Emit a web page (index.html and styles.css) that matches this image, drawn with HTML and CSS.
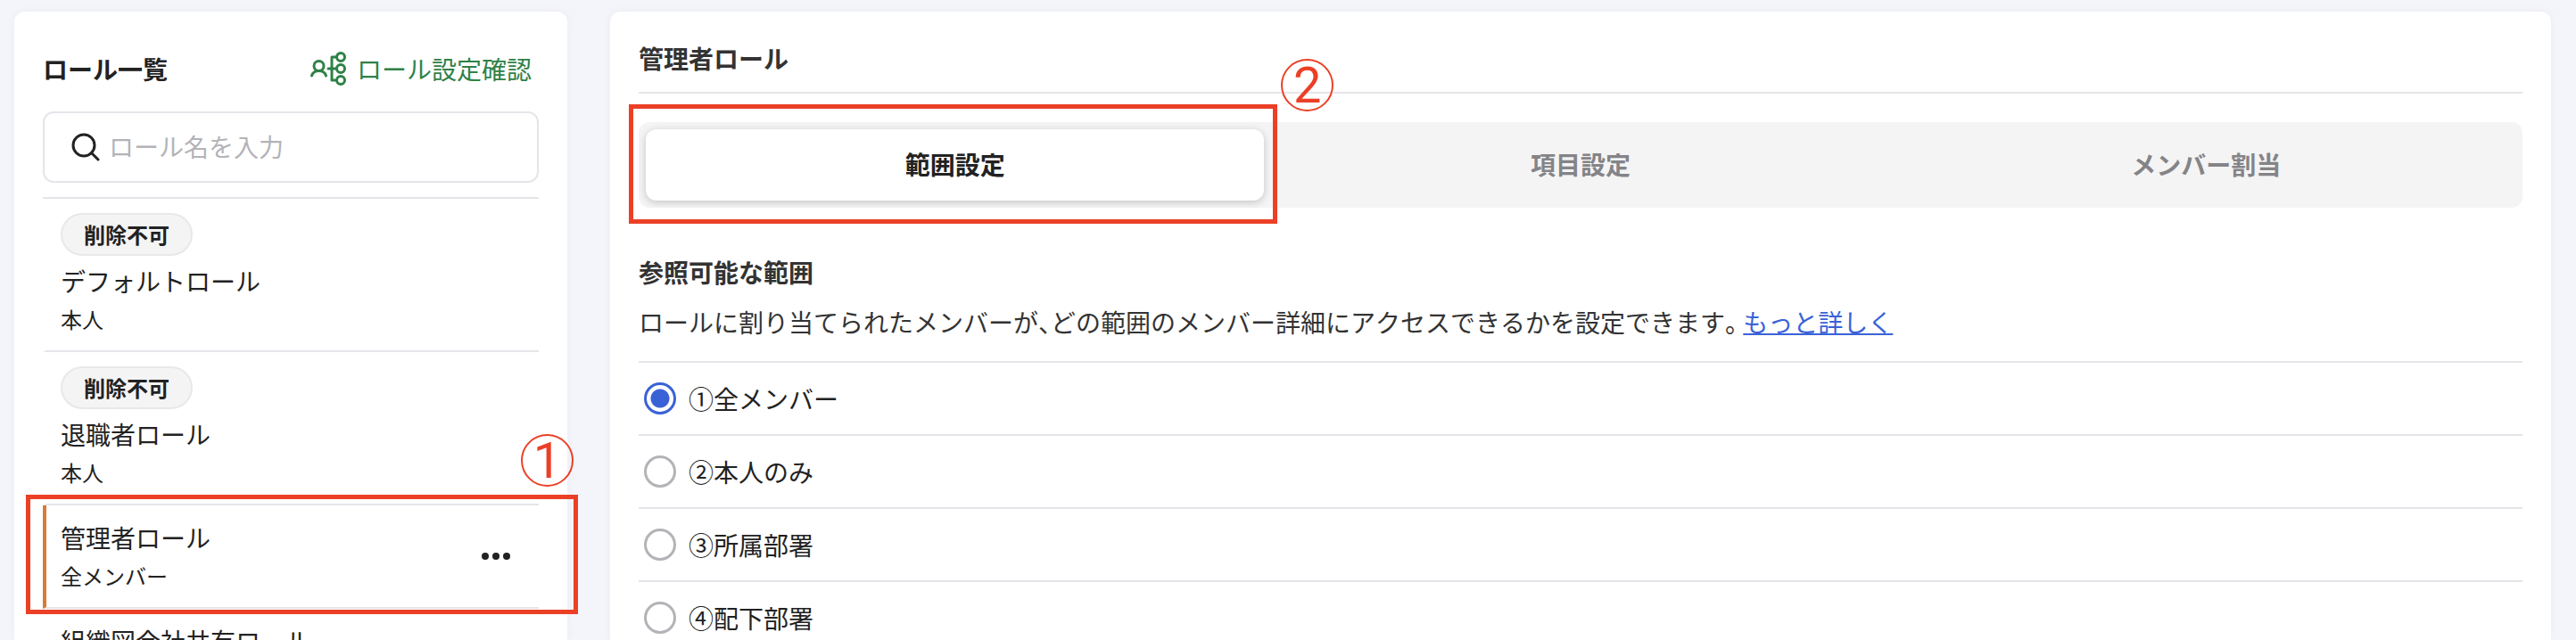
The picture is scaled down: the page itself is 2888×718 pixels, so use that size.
FILE: index.html
```html
<!DOCTYPE html>
<html lang="ja">
<head>
    <meta charset="UTF-8">
    <meta name="viewport" content="width=device-width, initial-scale=1">
    <title>ロール一覧</title>
    <link rel="stylesheet" href="styles.css">
</head>
<body>
    <aside class="panel sidebar">
        <div class="sidebar-header">
            <h2>ロール一覧</h2>
            <a href="#" class="confirm-link">
                <svg width="42" height="42" viewBox="0 0 42 42" fill="none" stroke="currentColor" stroke-width="3" stroke-linecap="round">
                    <circle cx="11.5" cy="18" r="5.5"></circle>
                    <path d="M3.5 29c1-3.5 4-5.5 8-5.5s7 2 8 5.5"></path>
                    <path d="M22 21h9.5M31.5 8H26v26h5.5" stroke-linejoin="round"></path>
                    <circle cx="36" cy="8" r="4.5"></circle>
                    <circle cx="36" cy="21" r="4.5"></circle>
                    <circle cx="36" cy="34" r="4.5"></circle>
                </svg>
                ロール設定確認
            </a>
        </div>

        <label class="search">
            <svg width="32" height="32" viewBox="0 0 32 32" fill="none" stroke="currentColor" stroke-width="3" stroke-linecap="round">
                <circle cx="14" cy="14" r="12"></circle>
                <path d="M22.5 22.5L30 30"></path>
            </svg>
            <input type="text" placeholder="ロール名を入力" aria-label="ロール名を入力">
        </label>

        <ul class="role-list">
            <li class="role">
                <span class="badge">削除不可</span>
                <p class="role-name">デフォルトロール</p>
                <p class="role-scope">本人</p>
            </li>
            <li class="role">
                <span class="badge">削除不可</span>
                <p class="role-name">退職者ロール</p>
                <p class="role-scope">本人</p>
            </li>
            <li class="role selected">
                <p class="role-name">管理者ロール</p>
                <p class="role-scope">全メンバー</p>
                <button class="more-button" aria-label="メニュー">
                    <svg width="32" height="10" viewBox="0 0 32 10" fill="currentColor">
                        <circle cx="4" cy="5" r="4"></circle>
                        <circle cx="16" cy="5" r="4"></circle>
                        <circle cx="28" cy="5" r="4"></circle>
                    </svg>
                </button>
                <div class="mark mark-role"></div>
                <span class="mark-number number-role">1</span>
            </li>
            <li class="role">
                <p class="role-name">組織図会社共有ロール</p>
            </li>
        </ul>
    </aside>

    <main class="panel content">
        <h1>管理者ロール</h1>

        <div class="tabs">
            <div class="tab-item">
                <button class="tab active">範囲設定</button>
                <div class="mark mark-tab"></div>
                <span class="mark-number number-tab">2</span>
            </div>
            <div class="tab-item">
                <button class="tab">項目設定</button>
            </div>
            <div class="tab-item">
                <button class="tab">メンバー割当</button>
            </div>
        </div>

        <h2>参照可能な範囲</h2>
        <p class="description">ロールに割り当てられたメンバーが、どの範囲のメンバー詳細にアクセスできるかを設定できます。 <a href="#">もっと詳しく</a></p>

        <div class="options">
            <label class="option"><input type="radio" name="scope" checked>①全メンバー</label>
            <label class="option"><input type="radio" name="scope">②本人のみ</label>
            <label class="option"><input type="radio" name="scope">③所属部署</label>
            <label class="option"><input type="radio" name="scope">④配下部署</label>
        </div>
    </main>
</body>
</html>
```

FILE: styles.css
```css
* {
    box-sizing: border-box;
    margin: 0;
    padding: 0;
}

body {
    display: flex;
    gap: 48px;
    height: 100vh;
    padding: 13px 28px 0 16px;
    overflow: hidden;
    background-color: #f4f5fa;
    color: #222222;
    font-family: "Noto Sans CJK JP", sans-serif;
    font-size: 28px;
    line-height: 40px;
}

button, input {
    font: inherit;
    color: inherit;
}

h1, h2 {
    font-size: 28px;
    font-weight: 700;
}

.panel {
    padding: 32px 32px 0;
    background-color: #ffffff;
    border-radius: 12px 12px 0 0;
    box-shadow: 0 0 12px rgba(34, 34, 80, 0.04);
}

/* サイドバー */
.sidebar {
    flex: 0 0 620px;
}

.sidebar-header {
    display: flex;
    align-items: center;
    justify-content: space-between;
    height: 64px;
    margin-bottom: 16px;
    padding-right: 8px;
}

.confirm-link {
    display: flex;
    align-items: center;
    gap: 12px;
    color: #2f8146;
    text-decoration: none;
}

.search {
    display: flex;
    align-items: center;
    gap: 10px;
    height: 80px;
    margin-bottom: 16px;
    padding: 0 30px;
    border: 2px solid #e5e5ea;
    border-radius: 12px;
}

.search input {
    flex: 1;
    min-width: 0;
    padding-bottom: 2px;
    border: none;
    outline: none;
    background: none;
}

.search input::placeholder {
    color: #b3b3b8;
    opacity: 1;
}

.role-list {
    list-style: none;
    border-top: 2px solid #e5e5ea;
}

.role {
    position: relative;
    padding: 16px;
    border-left: 4px solid transparent;
    border-bottom: 2px solid #e5e5ea;
}

.role.selected {
    border-left-color: #d97b35;
}

.badge {
    display: block;
    width: fit-content;
    margin-bottom: 8px;
    padding: 0 24px;
    border: 2px solid #e8e8e8;
    border-radius: 24px;
    background-color: #f4f4f4;
    font-size: 24px;
    font-weight: 700;
    line-height: 44px;
}

.role-scope {
    margin-top: 4px;
    font-size: 24px;
    line-height: 38px;
}

.more-button {
    position: absolute;
    top: 33px;
    right: 24px;
    display: flex;
    align-items: center;
    justify-content: center;
    width: 48px;
    height: 48px;
    border: none;
    background: none;
    cursor: pointer;
}

/* 右側の設定エリア */
.content {
    flex: 1;
    min-width: 0;
    color: #333333;
}

.content h1 {
    margin-bottom: 32px;
    padding-bottom: 18px;
    border-bottom: 2px solid #e5e5ea;
}

.tabs {
    display: flex;
    gap: 8px;
    margin-bottom: 52px;
    padding: 8px;
    border-radius: 12px;
    background-color: #f4f4f4;
}

.tab-item {
    position: relative;
    flex: 1;
}

.tab {
    width: 100%;
    height: 80px;
    padding-bottom: 2px;
    border: none;
    border-radius: 12px;
    background: none;
    color: #848488;
    font-weight: 700;
    cursor: pointer;
}

.tab.active {
    background-color: #ffffff;
    color: #222222;
    box-shadow: 0 2px 8px rgba(0, 0, 0, 0.2);
}

.content h2 {
    margin-bottom: 16px;
}

.description {
    margin-bottom: 24px;
    font-feature-settings: "halt";
    font-kerning: none;
}

.description a {
    color: #3a62d7;
    text-decoration-thickness: 2px;
    text-decoration-skip-ink: none;
}

.options {
    border-top: 2px solid #e5e5ea;
    color: #222222;
}

.option {
    display: flex;
    align-items: center;
    gap: 14px;
    height: 82px;
    padding-left: 6px;
    border-bottom: 2px solid #e5e5ea;
}

.option input {
    appearance: none;
    width: 36px;
    height: 36px;
    border: 3px solid #b3b3b8;
    border-radius: 50%;
}

.option input:checked {
    border-color: #3a62d7;
    background: radial-gradient(circle, #3a62d7 10px, transparent 11px);
}

/* 赤枠と番号 */
.mark {
    position: absolute;
    border: 5px solid #eb4026;
    pointer-events: none;
}

.mark-role {
    top: -12px;
    right: -44px;
    bottom: -8px;
    left: -23px;
}

.mark-tab {
    top: -28px;
    right: -15px;
    bottom: -26px;
    left: -19px;
}

.mark-number {
    position: absolute;
    width: 59px;
    height: 59px;
    border: 2px solid #eb4026;
    border-radius: 50%;
    color: #eb4026;
    font-family: Roboto, sans-serif;
    font-size: 56px;
    font-weight: 400;
    line-height: 56px;
    text-align: center;
}

.number-role {
    top: -80px;
    right: -39px;
}

.number-tab {
    top: -79px;
    right: -78px;
}
```
